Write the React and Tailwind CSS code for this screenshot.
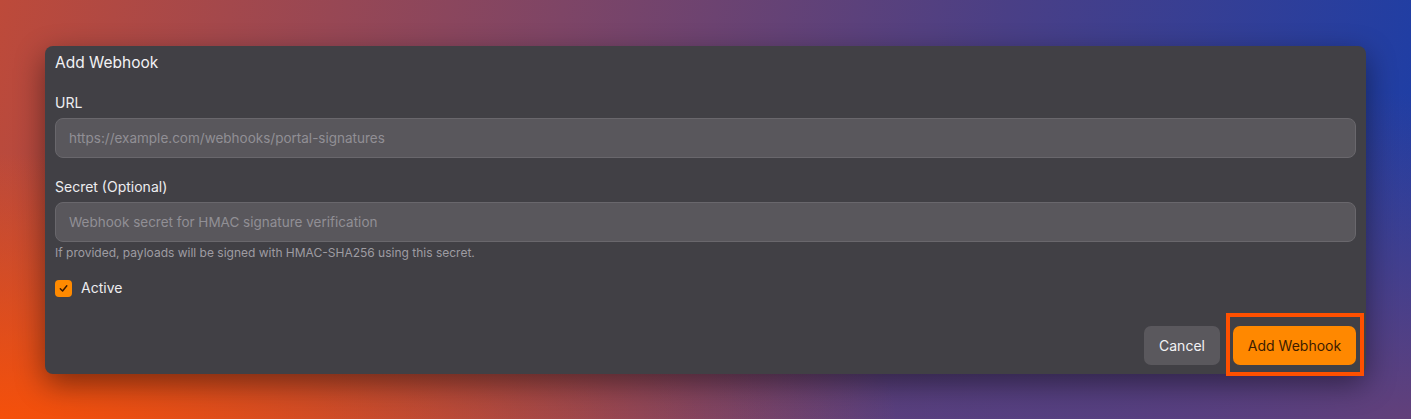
import React, { useState } from 'react';

const App = () => {
  const [url, setUrl] = useState('');
  const [secret, setSecret] = useState('');
  const [active, setActive] = useState(true);

  return (
    <div
      className="w-[1411px] h-[419px] flex items-center justify-center bg-[radial-gradient(ellipse_at_0%_100%,#f5500a_0%,rgba(240,80,10,0)_45%),radial-gradient(ellipse_at_100%_100%,#62407a_0%,rgba(98,64,122,0)_55%),linear-gradient(100deg,#bd4a3a_0%,#7e4566_38%,#4a3f86_68%,#1a3ea8_100%)]"
      style={{ fontFamily: 'Inter, "Noto Sans", sans-serif' }}
    >
      <div className="w-[1321px] h-[328px] flex flex-col bg-[#414045] rounded-[8px] px-[10px] pt-[8px] pb-[9px] shadow-[0_10px_30px_rgba(0,0,0,0.45)]">
        <h2 className="text-[15.5px] leading-[18px] text-[#f2f2f4] font-normal">Add Webhook</h2>

        <label className="mt-[23px] text-[14px] leading-[16px] text-[#ededf0]">URL</label>
        <input
          className="mt-[7px] h-[40px] w-full rounded-[8px] bg-[#59575c] border border-[#69676c] px-[13px] text-[13.5px] text-white placeholder:text-[#918f95] outline-none"
          placeholder="https://example.com/webhooks/portal-signatures"
          value={url}
          onChange={(e) => setUrl(e.target.value)}
        />

        <label className="mt-[21px] text-[14px] leading-[16px] text-[#ededf0]">Secret (Optional)</label>
        <input
          className="mt-[7px] h-[40px] w-full rounded-[8px] bg-[#59575c] border border-[#69676c] px-[13px] text-[13.5px] text-white placeholder:text-[#918f95] outline-none"
          placeholder="Webhook secret for HMAC signature verification"
          value={secret}
          onChange={(e) => setSecret(e.target.value)}
        />
        <p className="mt-[4px] text-[12px] leading-[14px] text-[#9e9ca2]">
          If provided, payloads will be signed with HMAC-SHA256 using this secret.
        </p>

        <button
          type="button"
          className="mt-[20px] flex items-center gap-[9px] self-start"
          onClick={() => setActive(!active)}
        >
          <span className={`w-[17px] h-[17px] rounded-[4px] flex items-center justify-center ${active ? 'bg-[#ff8a00]' : 'bg-[#59575c] border border-[#69676c]'}`}>
            {active && (
              <svg width="11" height="11" viewBox="0 0 12 12" fill="none">
                <path d="M2.5 6.3 L5 8.8 L9.6 3" stroke="#3a1800" strokeWidth="1.6" strokeLinecap="round" strokeLinejoin="round" />
              </svg>
            )}
          </span>
          <span className="text-[14px] leading-[16px] text-[#ededf0]">Active</span>
        </button>

        <div className="mt-auto flex justify-end gap-[13px]">
          <button type="button" className="h-[39px] w-[76px] rounded-[7px] bg-[#5a585d] text-[14px] text-[#f2f2f4]">
            Cancel
          </button>
          <div className="relative">
            <button type="button" className="h-[39px] w-[123px] rounded-[7px] bg-[#ff8800] text-[14px] text-[#3d1c00]">
              Add Webhook
            </button>
            <div className="absolute top-[-13px] bottom-[-11px] left-[-7px] right-[-8px] border-[4px] border-[#ff5000] pointer-events-none" />
          </div>
        </div>
      </div>
    </div>
  );
};

export default App;
